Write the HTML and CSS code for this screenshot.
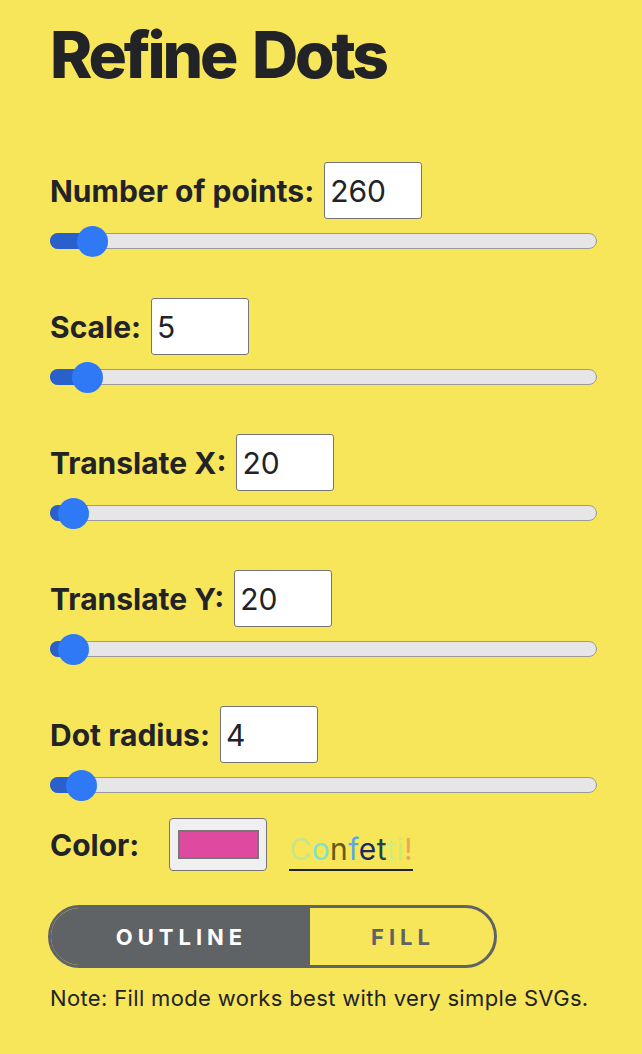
FILE: index.html
```html
<!DOCTYPE html>
<html>
<head>
<meta charset="utf-8">
<link rel="stylesheet" href="styles.css">
</head>
<body>
<main class="panel">
  <h1 class="title">Refine Dots</h1>

  <section class="field">
    <div class="field-row">
      <label class="label">Number of points:</label>
      <input class="num" type="text" value="260">
    </div>
    <div class="slider"><div class="fill" style="width:41px"></div><div class="thumb" style="left:26px"></div></div>
  </section>

  <section class="field">
    <div class="field-row">
      <label class="label">Scale:</label>
      <input class="num" type="text" value="5">
    </div>
    <div class="slider"><div class="fill" style="width:36px"></div><div class="thumb" style="left:21px"></div></div>
  </section>

  <section class="field">
    <div class="field-row">
      <label class="label">Translate X:</label>
      <input class="num" type="text" value="20">
    </div>
    <div class="slider"><div class="fill" style="width:22px"></div><div class="thumb" style="left:7px"></div></div>
  </section>

  <section class="field">
    <div class="field-row">
      <label class="label">Translate Y:</label>
      <input class="num" type="text" value="20">
    </div>
    <div class="slider"><div class="fill" style="width:22px"></div><div class="thumb" style="left:7px"></div></div>
  </section>

  <section class="field">
    <div class="field-row">
      <label class="label">Dot radius:</label>
      <input class="num" type="text" value="4">
    </div>
    <div class="slider"><div class="fill" style="width:30px"></div><div class="thumb" style="left:15px"></div></div>
  </section>

  <div class="color-row">
    <span class="label">Color:</span>
    <button class="swatch"><span class="swatch-inner"></span></button>
    <a class="confetti" href="#"><span class="c1">C</span><span class="c2">o</span><span class="c3">n</span><span class="c4">f</span><span class="c5">e</span><span class="c6">t</span><span class="c7">t</span><span class="c8">i</span><span class="c9">!</span></a>
  </div>

  <div class="toggle">
    <span class="opt opt-active">OUTLINE</span>
    <span class="opt">FILL</span>
  </div>

  <p class="note">Note: Fill mode works best with very simple SVGs.</p>
</main>
</body>
</html>
```

FILE: styles.css
```css
* { box-sizing: border-box; }
html, body {
  margin: 0;
  padding: 0;
  background: #f7e659;
}
body {
  font-family: Inter, "Noto Sans", sans-serif;
  color: #222326;
}
.panel {
  padding: 17px 45px 0 50px;
  width: 642px;
}
.title {
  margin: 0 0 69px 0;
  font-size: 64px;
  font-weight: 800;
  line-height: 76px;
  letter-spacing: -3.2px;
  word-spacing: 6px;
}
.field {
  display: flex;
  flex-direction: column;
  margin-bottom: 49px;
}
.field-row {
  display: flex;
  align-items: center;
  gap: 10px;
  height: 57px;
}
.label {
  font-size: 30px;
  font-weight: 700;
  letter-spacing: 0;
}
.num {
  width: 98px;
  height: 57px;
  border: 1.5px solid #767676;
  border-radius: 3px;
  background: #fff;
  font-family: Inter, "Noto Sans", sans-serif;
  font-size: 30px;
  color: #222326;
  padding: 0 0 0 5px;
  outline: none;
}
.slider {
  position: relative;
  margin-top: 14px;
  width: 547px;
  height: 16px;
  border: 1.5px solid #9a9a9a;
  border-radius: 8px;
  background: #e6e6e6;
}
.fill {
  background: #2a60cc;
  border-radius: 8px 0 0 8px;
  margin: -1.5px 0 0 -1.5px;
  height: 16px;
}
.thumb {
  position: absolute;
  top: 50%;
  width: 31px;
  height: 31px;
  margin-top: -15.5px;
  border-radius: 50%;
  background: #2f79f6;
}
.color-row {
  display: flex;
  align-items: center;
  margin-top: -24px;
  height: 53px;
}
.swatch {
  margin-left: 30px;
  width: 98px;
  height: 53px;
  background: #efefef;
  border: 1.5px solid #767676;
  border-radius: 4px;
  padding: 0;
  display: flex;
  align-items: center;
  justify-content: center;
}
.swatch-inner {
  display: block;
  width: 81px;
  height: 29px;
  background: #dd4a9f;
  border: 2px solid #777;
}
.confetti {
  margin-left: 22px;
  font-size: 30px;
  letter-spacing: 0.4px;
  text-decoration: none;
  border-bottom: 2px solid #222326;
  padding-bottom: 5px;
  margin-top: 16px;
  line-height: 30px;
}
.c1 { color: #c9e58a; }
.c2 { color: #7fe2cf; }
.c3 { color: #665817; }
.c4 { color: #5ba6ec; }
.c5 { color: #1c2766; }
.c6 { color: #1f4450; }
.c7 { color: #cfee7c; }
.c8 { color: #c5ee72; }
.c9 { color: #e8a85a; }
.toggle {
  margin-top: 34px;
  margin-left: -2px;
  width: 449px;
  height: 63px;
  border: 3px solid #606366;
  border-radius: 32px;
  display: flex;
  overflow: hidden;
}
.opt {
  flex: 1;
  display: flex;
  align-items: center;
  justify-content: center;
  font-size: 22px;
  font-weight: 700;
  letter-spacing: 5px;
  color: #606366;
  padding-left: 2px;
}
.opt-active {
  flex: 0 0 259px;
  background: #606366;
  color: #fff;
}
.note {
  margin: 17px 0 0 0;
  font-size: 22px;
  line-height: 26px;
  letter-spacing: 0.35px;
}
```
